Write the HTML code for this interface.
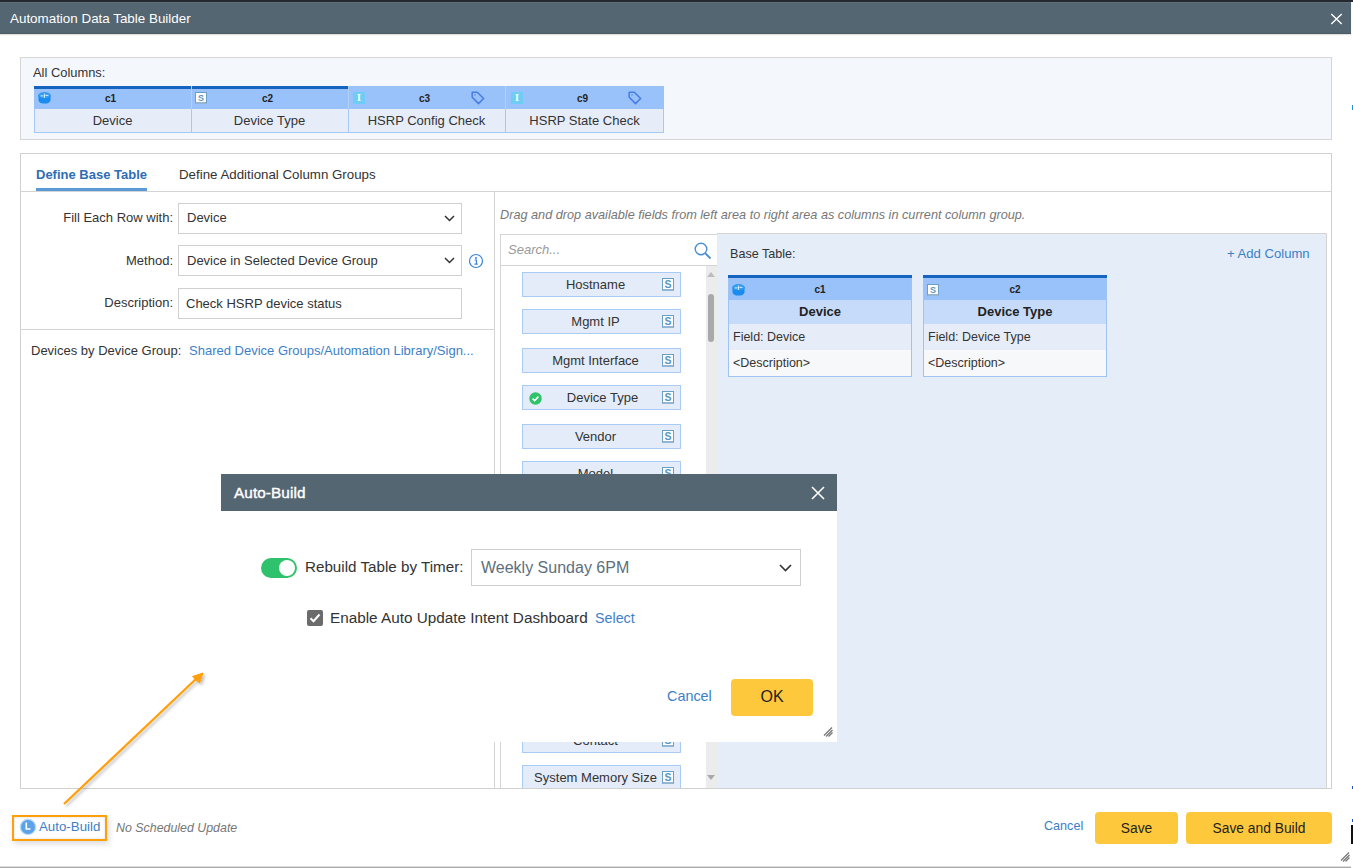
<!DOCTYPE html>
<html><head><meta charset="utf-8">
<style>
*{box-sizing:border-box;margin:0;padding:0}
html,body{width:1353px;height:868px;overflow:hidden;background:#fff;font-family:"Liberation Sans",sans-serif;color:#333}
.a{position:absolute}
.nw{white-space:nowrap}
#topstrip{left:0;top:0;width:1353px;height:2px;background:#23292e}
#titlebar{left:0;top:2px;width:1351px;height:32px;background:#546672;border-top:1px solid #5f727e;border-bottom:1px solid #4b5c67;box-shadow:0 1px 1px rgba(0,0,0,0.12)}
#title{left:10px;top:8px;font-size:13.4px;color:#fff;white-space:nowrap}
#win{left:0;top:34px;width:1351px;height:834px;background:#fff;border-bottom:1px solid #ababab}
#allcols{left:20px;top:57px;width:1312px;height:83px;background:#f4f8fc;border:1px solid #d6d6d6}
/* column table */
.ch{top:86px;height:23px;background:#99c1fa}
.cb{top:109px;height:24px;background:#e6edf9;border:1px solid #a6c8f6;border-top:none}
.cbar{top:86px;height:3px;background:#1565c0}
.clab{font-size:10px;font-weight:bold;color:#222;text-align:center}
.ctxt{font-size:13px;color:#333;text-align:center}
#panel{left:20px;top:153px;width:1312px;height:636px;border:1px solid #d0d0d0;background:#fff}
.lbl{font-size:13px;color:#333;text-align:right;white-space:nowrap}
.sel{left:178px;width:284px;height:31px;border:1px solid #d0d0d0;background:#fff}
.seltxt{font-size:13px;color:#333;white-space:nowrap}
.fitem{left:522px;width:159px;height:25px;background:#e4ecf9;border:1px solid #a9cbf6}
.fitxt{top:4px;font-size:13px;color:#333;text-align:center;white-space:nowrap}
.sico{width:12px;height:13px;border:1px solid #6a9fc6;border-bottom:2px solid #94b6d2;background:#fff;color:#5b96c0;font-size:10.5px;font-weight:bold;line-height:11px;text-align:center}
.sico2{width:12px;height:12px;border:1px solid #6a9fc6;border-bottom:2px solid #94b6d2;background:#fff;color:#5b96c0;font-size:9px;font-weight:bold;line-height:10px;text-align:center}
.card{top:275px;width:184px;height:102px;border:1px solid #9fc4f4;border-top:none;background:#f7f8fa}
.cbar2{left:-1px;top:0;width:184px;height:3px;background:#1565c0}
.chd{left:0;top:3px;width:182px;height:22px;background:#99c1fa}
.ctt{left:0;top:25px;width:182px;height:24px;background:#c6dbf9;font-size:13px;font-weight:bold;color:#222;text-align:center;line-height:24px}
.cfld{left:0;top:49px;width:182px;height:26px;background:#e6edf9;font-size:12.5px;color:#333;padding-left:4px;line-height:26px;white-space:nowrap}
.cdsc{left:0;top:75px;width:182px;height:26px;font-size:12.5px;color:#333;padding-left:4px;line-height:26px;white-space:nowrap}
.iico{width:12px;height:12px;background:#6fcdf5;color:#fff;font-size:10px;font-weight:bold;line-height:12px;text-align:center;font-family:"Liberation Serif",serif}
.btn{top:812px;height:32px;border-radius:4px;background:#fec83c;color:#222;font-size:13.8px;text-align:center;line-height:34px;white-space:nowrap}
</style></head><body>
<div class="a" id="topstrip"></div>
<div class="a" id="win"></div>
<div class="a" id="titlebar"><div class="a" id="title">Automation Data Table Builder</div>
<svg class="a" style="left:1330px;top:10px" width="13" height="12" viewBox="0 0 13 12"><path d="M1.3 1L11.7 11M11.7 1L1.3 11" stroke="#fff" stroke-width="1.4"/></svg>
</div>

<!-- All columns -->
<div class="a" id="allcols"></div>
<div class="a nw" style="left:33px;top:65px;font-size:12.9px;color:#333">All Columns:</div>
<div class="a ch" style="left:34px;width:157px"></div>
<div class="a ch" style="left:191px;width:157px;border-left:1px solid #b3d0f7"></div>
<div class="a ch" style="left:348px;width:157px;border-left:1px solid #b3d0f7"></div>
<div class="a ch" style="left:505px;width:159px;border-left:1px solid #b3d0f7"></div>
<div class="a cbar" style="left:34px;width:157px"></div>
<div class="a cbar" style="left:192px;width:156px"></div>
<div class="a cb" style="left:34px;width:158px"></div>
<div class="a cb" style="left:191px;width:158px"></div>
<div class="a cb" style="left:348px;width:158px"></div>
<div class="a cb" style="left:505px;width:159px"></div>
<div class="a clab" style="left:32px;top:93px;width:157px">c1</div>
<div class="a clab" style="left:189px;top:93px;width:157px">c2</div>
<div class="a clab" style="left:346px;top:93px;width:157px">c3</div>
<div class="a clab" style="left:503px;top:93px;width:159px">c9</div>
<div class="a ctxt" style="left:34px;top:113px;width:157px">Device</div>
<div class="a ctxt" style="left:191px;top:113px;width:157px">Device Type</div>
<div class="a ctxt" style="left:348px;top:113px;width:157px">HSRP Config Check</div>
<div class="a ctxt" style="left:505px;top:113px;width:159px">HSRP State Check</div>

<!-- main panel -->
<div class="a" id="panel"></div>
<div class="a" style="left:21px;top:191px;width:1310px;height:1px;background:#d4d4d4"></div>
<div class="a nw" style="left:36px;top:167px;font-size:13px;font-weight:bold;color:#2f6db5">Define Base Table</div>
<div class="a" style="left:36px;top:188px;width:111px;height:3px;background:#5a9ad6"></div>
<div class="a nw" style="left:179px;top:167px;font-size:13.3px;color:#333">Define Additional Column Groups</div>

<!-- left form -->
<div class="a" style="left:494px;top:191px;width:1px;height:597px;background:#d4d4d4"></div>
<div class="a" style="left:21px;top:329px;width:473px;height:1px;background:#d4d4d4"></div>
<div class="a lbl" style="left:40px;top:210px;width:133px">Fill Each Row with:</div>
<div class="a lbl" style="left:40px;top:253px;width:133px">Method:</div>
<div class="a lbl" style="left:40px;top:295px;width:133px">Description:</div>
<div class="a sel" style="top:203px"></div>
<div class="a sel" style="top:245px"></div>
<div class="a sel" style="top:288px;height:31px"></div>
<div class="a seltxt" style="left:187px;top:210px">Device</div>
<div class="a seltxt" style="left:187px;top:253px">Device in Selected Device Group</div>
<div class="a seltxt" style="left:186px;top:296px">Check HSRP device status</div>
<svg class="a" style="left:444px;top:215px" width="11" height="7" viewBox="0 0 11 7"><path d="M1 1L5.5 5.5L10 1" fill="none" stroke="#333" stroke-width="1.5"/></svg>
<svg class="a" style="left:444px;top:257px" width="11" height="7" viewBox="0 0 11 7"><path d="M1 1L5.5 5.5L10 1" fill="none" stroke="#333" stroke-width="1.5"/></svg>
<svg class="a" style="left:468px;top:253px" width="16" height="16" viewBox="0 0 16 16"><circle cx="8" cy="8" r="6.5" fill="none" stroke="#3b86d6" stroke-width="1.2"/><circle cx="8" cy="5" r="1" fill="#3b86d6"/><path d="M6.5 7H8.4V11M6.5 11.2H9.8" fill="none" stroke="#3b86d6" stroke-width="1.2"/></svg>
<div class="a nw" style="left:31px;top:343px;font-size:13px;color:#333">Devices by Device Group:</div>
<div class="a nw" style="left:189px;top:343px;font-size:13px;color:#3d7fc7">Shared Device Groups/Automation Library/Sign...</div>


<!-- right area -->
<div class="a nw" style="left:500px;top:208px;font-size:12.7px;font-style:italic;color:#777">Drag and drop available fields from left area to right area as columns in current column group.</div>
<div class="a" style="left:500px;top:234px;width:218px;height:554px;border:1px solid #d4d4d4;border-bottom:none;background:#fff;overflow:hidden">
<div class="a" style="left:0;top:30px;width:216px;height:1px;background:#d4d4d4"></div>
<div class="a nw" style="left:7px;top:7px;font-size:13px;font-style:italic;color:#999">Search...</div>
<svg class="a" style="left:193px;top:7px" width="18" height="18" viewBox="0 0 18 18"><circle cx="7" cy="7" r="5.8" fill="none" stroke="#4a8fd6" stroke-width="1.4"/><path d="M11.2 11.2L16.5 16.5" stroke="#4a8fd6" stroke-width="1.9"/></svg>
<div class="a" style="left:205px;top:31px;width:12px;height:522px;background:#ececec"></div>
</div>
<div class="a" style="left:500px;top:265px;width:205px;height:523px;overflow:hidden">
<div class="a" style="left:-500px;top:-265px;width:1353px;height:868px">
<div class="a fitem" style="top:272px"><div class="a fitxt" style="left:0;width:145px">Hostname</div><div class="a sico" style="left:139px;top:5px">S</div></div>
<div class="a fitem" style="top:309px"><div class="a fitxt" style="left:0;width:145px">Mgmt IP</div><div class="a sico" style="left:139px;top:5px">S</div></div>
<div class="a fitem" style="top:348px"><div class="a fitxt" style="left:0;width:145px">Mgmt Interface</div><div class="a sico" style="left:139px;top:5px">S</div></div>
<div class="a fitem" style="top:385px"><svg class="a" style="left:6px;top:6px" width="13" height="13" viewBox="0 0 13 13"><circle cx="6.5" cy="6.5" r="6.2" fill="#2ec26a"/><path d="M3.6 6.7L5.7 8.7L9.4 4.6" fill="none" stroke="#fff" stroke-width="1.6"/></svg><div class="a fitxt" style="left:12px;width:135px">Device Type</div><div class="a sico" style="left:139px;top:5px">S</div></div>
<div class="a fitem" style="top:424px"><div class="a fitxt" style="left:0;width:145px">Vendor</div><div class="a sico" style="left:139px;top:5px">S</div></div>
<div class="a fitem" style="top:461px"><div class="a fitxt" style="left:0;width:145px">Model</div><div class="a sico" style="left:139px;top:5px">S</div></div>
<div class="a fitem" style="top:499px"><div class="a fitxt" style="left:0;width:145px">Serial Number</div><div class="a sico" style="left:139px;top:5px">S</div></div>
<div class="a fitem" style="top:537px"><div class="a fitxt" style="left:0;width:145px">OS Version</div><div class="a sico" style="left:139px;top:5px">S</div></div>
<div class="a fitem" style="top:575px"><div class="a fitxt" style="left:0;width:145px">Site</div><div class="a sico" style="left:139px;top:5px">S</div></div>
<div class="a fitem" style="top:613px"><div class="a fitxt" style="left:0;width:145px">Location</div><div class="a sico" style="left:139px;top:5px">S</div></div>
<div class="a fitem" style="top:651px"><div class="a fitxt" style="left:0;width:145px">Assigned To</div><div class="a sico" style="left:139px;top:5px">S</div></div>
<div class="a fitem" style="top:689px"><div class="a fitxt" style="left:0;width:145px">Description</div><div class="a sico" style="left:139px;top:5px">S</div></div>
<div class="a fitem" style="top:728px"><div class="a fitxt" style="left:0;width:145px">Contact</div><div class="a sico" style="left:139px;top:5px">S</div></div>
<div class="a fitem" style="top:765px"><div class="a fitxt" style="left:0;width:145px">System Memory Size</div><div class="a sico" style="left:139px;top:5px">S</div></div>
</div></div>
<svg class="a" style="left:706px;top:271px" width="10" height="7" viewBox="0 0 10 7"><path d="M1 6H9L5 1Z" fill="#bdbdbd"/></svg>
<div class="a" style="left:708px;top:294px;width:6px;height:48px;background:#a9a9a9;border-radius:3px"></div>
<svg class="a" style="left:706px;top:774px" width="10" height="7" viewBox="0 0 10 7"><path d="M1 1H9L5 6Z" fill="#a9a9a9"/></svg>

<!-- blue area -->
<div class="a" style="left:717px;top:233px;width:610px;height:555px;background:#e5edf9;border-top:1px solid #d4d4d4;border-right:1px solid #d4d4d4"></div>
<div class="a nw" style="left:730px;top:247px;font-size:12.6px;color:#333">Base Table:</div>
<div class="a nw" style="left:1227px;top:246px;font-size:13.1px;color:#3d7fc7">+ Add Column</div>
<div class="a card" style="left:728px"><div class="a cbar2"></div><div class="a chd"></div><div class="a ctt">Device</div><div class="a cfld">Field: Device</div><div class="a cdsc">&lt;Description&gt;</div></div><div class="a card" style="left:923px"><div class="a cbar2"></div><div class="a chd"></div><div class="a ctt">Device Type</div><div class="a cfld">Field: Device Type</div><div class="a cdsc">&lt;Description&gt;</div></div>
<svg class="a" style="left:38px;top:92px" width="13" height="12" viewBox="0 0 13 12"><path d="M0.5 3.6V8.3A6 3.3 0 0 0 12.5 8.3V3.6Z" fill="#1b8cef"/><ellipse cx="6.5" cy="3.6" rx="6" ry="3.1" fill="#33a0f7" stroke="#1a84e6" stroke-width="0.6"/><path d="M2.6 3.9H5.6M7.4 3.4H10.4M6.5 1.6V5.9" stroke="#e6f4ff" stroke-width="0.9"/></svg><div class="a sico2" style="left:195px;top:92px">S</div><div class="a iico" style="left:353px;top:92px">I</div><svg class="a" style="left:471px;top:91px" width="14" height="14" viewBox="0 0 14 14"><path d="M1.2 1.2H6.3L12.6 7.5L7.5 12.6L1.2 6.3Z" fill="none" stroke="#4a7ee6" stroke-width="1.6" stroke-linejoin="round"/><circle cx="4" cy="4" r="0.7" fill="#4a7ee6"/></svg><div class="a iico" style="left:511px;top:92px">I</div><svg class="a" style="left:628px;top:91px" width="14" height="14" viewBox="0 0 14 14"><path d="M1.2 1.2H6.3L12.6 7.5L7.5 12.6L1.2 6.3Z" fill="none" stroke="#4a7ee6" stroke-width="1.6" stroke-linejoin="round"/><circle cx="4" cy="4" r="0.7" fill="#4a7ee6"/></svg><svg class="a" style="left:732px;top:284px" width="13" height="12" viewBox="0 0 13 12"><path d="M0.5 3.6V8.3A6 3.3 0 0 0 12.5 8.3V3.6Z" fill="#1b8cef"/><ellipse cx="6.5" cy="3.6" rx="6" ry="3.1" fill="#33a0f7" stroke="#1a84e6" stroke-width="0.6"/><path d="M2.6 3.9H5.6M7.4 3.4H10.4M6.5 1.6V5.9" stroke="#e6f4ff" stroke-width="0.9"/></svg><div class="a sico2" style="left:927px;top:284px">S</div><div class="a clab" style="left:728px;top:284px;width:184px">c1</div><div class="a clab" style="left:923px;top:284px;width:184px">c2</div>
<!-- modal -->
<div class="a" style="left:221px;top:474px;width:616px;height:268px;background:#fff"></div>
<div class="a" style="left:221px;top:474px;width:616px;height:37px;background:#546672"></div>
<div class="a nw" style="left:234px;top:484px;font-size:15.3px;color:#fff;-webkit-text-stroke:0.4px #fff;letter-spacing:0.1px">Auto-Build</div>
<svg class="a" style="left:811px;top:486px" width="14" height="14" viewBox="0 0 14 14"><path d="M1 1L13 13M13 1L1 13" stroke="#fff" stroke-width="1.6"/></svg>
<div class="a" style="left:261px;top:558px;width:36px;height:20px;border-radius:10px;background:#2dc26b"></div>
<div class="a" style="left:279px;top:560px;width:16px;height:16px;border-radius:8px;background:#fff"></div>
<div class="a nw" style="left:305px;top:558px;font-size:15.2px;color:#333">Rebuild Table by Timer:</div>
<div class="a" style="left:471px;top:549px;width:330px;height:37px;border:1px solid #cfcfcf;background:#fff"></div>
<div class="a nw" style="left:481px;top:559px;font-size:16px;color:#5d6f7c">Weekly Sunday 6PM</div>
<svg class="a" style="left:779px;top:564px" width="13" height="8" viewBox="0 0 13 8"><path d="M1 1L6.5 6.5L12 1" fill="none" stroke="#333" stroke-width="1.6"/></svg>
<div class="a" style="left:307px;top:610px;width:16px;height:16px;border-radius:2px;background:#6b6b6b"></div>
<svg class="a" style="left:307px;top:610px" width="16" height="16" viewBox="0 0 16 16"><path d="M3.5 8.3L6.5 11.2L12.5 4.5" fill="none" stroke="#fff" stroke-width="2"/></svg>
<div class="a nw" style="left:330px;top:609px;font-size:15.3px;color:#333">Enable Auto Update Intent Dashboard</div>
<div class="a nw" style="left:595px;top:610px;font-size:14.3px;color:#3d7fc7">Select</div>
<div class="a nw" style="left:667px;top:688px;font-size:14.4px;color:#3d7fc7">Cancel</div>
<div class="a" style="left:731px;top:679px;width:82px;height:37px;border-radius:4px;background:#fec83c"></div>
<div class="a nw" style="left:731px;top:688px;width:82px;text-align:center;font-size:16px;color:#222">OK</div>
<svg class="a" style="left:823px;top:727px" width="10" height="10" viewBox="0 0 10 10"><path d="M1 8.5L9 0.5M3 9.5L9.5 3M5.5 9.5L9.5 5.5" stroke="#777" stroke-width="1.3"/></svg>

<!-- footer -->
<div class="a" style="left:12px;top:815px;width:95px;height:26px;border:2px solid #ff9f0a;box-shadow:inset 0 0 3px rgba(0,0,0,0.15), 2px 3px 6px rgba(0,0,0,0.14)"></div>
<svg class="a" style="left:19px;top:818px" width="18" height="18" viewBox="0 0 18 18"><circle cx="9" cy="9" r="8.3" fill="#b9d9f7"/><circle cx="9" cy="9" r="7" fill="#5aa3e8"/><path d="M7.3 4.5V11H11.5" fill="none" stroke="#fff" stroke-width="1.6"/></svg>
<div class="a nw" style="left:39px;top:819px;font-size:13.3px;color:#3d7fc7">Auto-Build</div>
<div class="a nw" style="left:116px;top:821px;font-size:12.4px;font-style:italic;color:#777">No Scheduled Update</div>
<div class="a nw" style="left:1044px;top:819px;font-size:12.6px;color:#3d7cc2">Cancel</div>
<div class="a btn" style="left:1095px;width:83px">Save</div>
<div class="a btn" style="left:1186px;width:146px">Save and Build</div>
<svg class="a" style="left:1340px;top:852px" width="10" height="10" viewBox="0 0 10 10"><path d="M1 8.5L9 0.5M3 9.5L9.5 3M5.5 9.5L9.5 5.5" stroke="#777" stroke-width="1.3"/></svg>

<!-- annotation arrow -->
<svg class="a" style="left:0;top:0;pointer-events:none" width="1353" height="868" viewBox="0 0 1353 868">
<defs><filter id="sh" x="-20%" y="-20%" width="140%" height="140%"><feGaussianBlur in="SourceAlpha" stdDeviation="1.5"/><feOffset dx="2" dy="2"/><feComponentTransfer><feFuncA type="linear" slope="0.25"/></feComponentTransfer><feMerge><feMergeNode/><feMergeNode in="SourceGraphic"/></feMerge></filter></defs>
<g filter="url(#sh)"><path d="M64 804L197 678" stroke="#ff9f0a" stroke-width="2.3"/><path d="M203 673L192.5 676.5L199.5 683Z" fill="#ff9f0a" stroke="#ff9f0a" stroke-width="1" stroke-linejoin="round"/></g>
</svg>

<div class="a" style="left:1352px;top:105px;width:1px;height:5px;background:#1e90e0"></div>
<div class="a" style="left:1352px;top:786px;width:1px;height:3px;background:#2050c0"></div>
<div class="a" style="left:1352px;top:819px;width:1px;height:3px;background:#2050c0"></div>
<div class="a" style="left:1351px;top:825px;width:2px;height:19px;background:#111"></div>
<div class="a" style="left:0;top:866px;width:1351px;height:1px;background:#dcdcdc"></div>
</body></html>
